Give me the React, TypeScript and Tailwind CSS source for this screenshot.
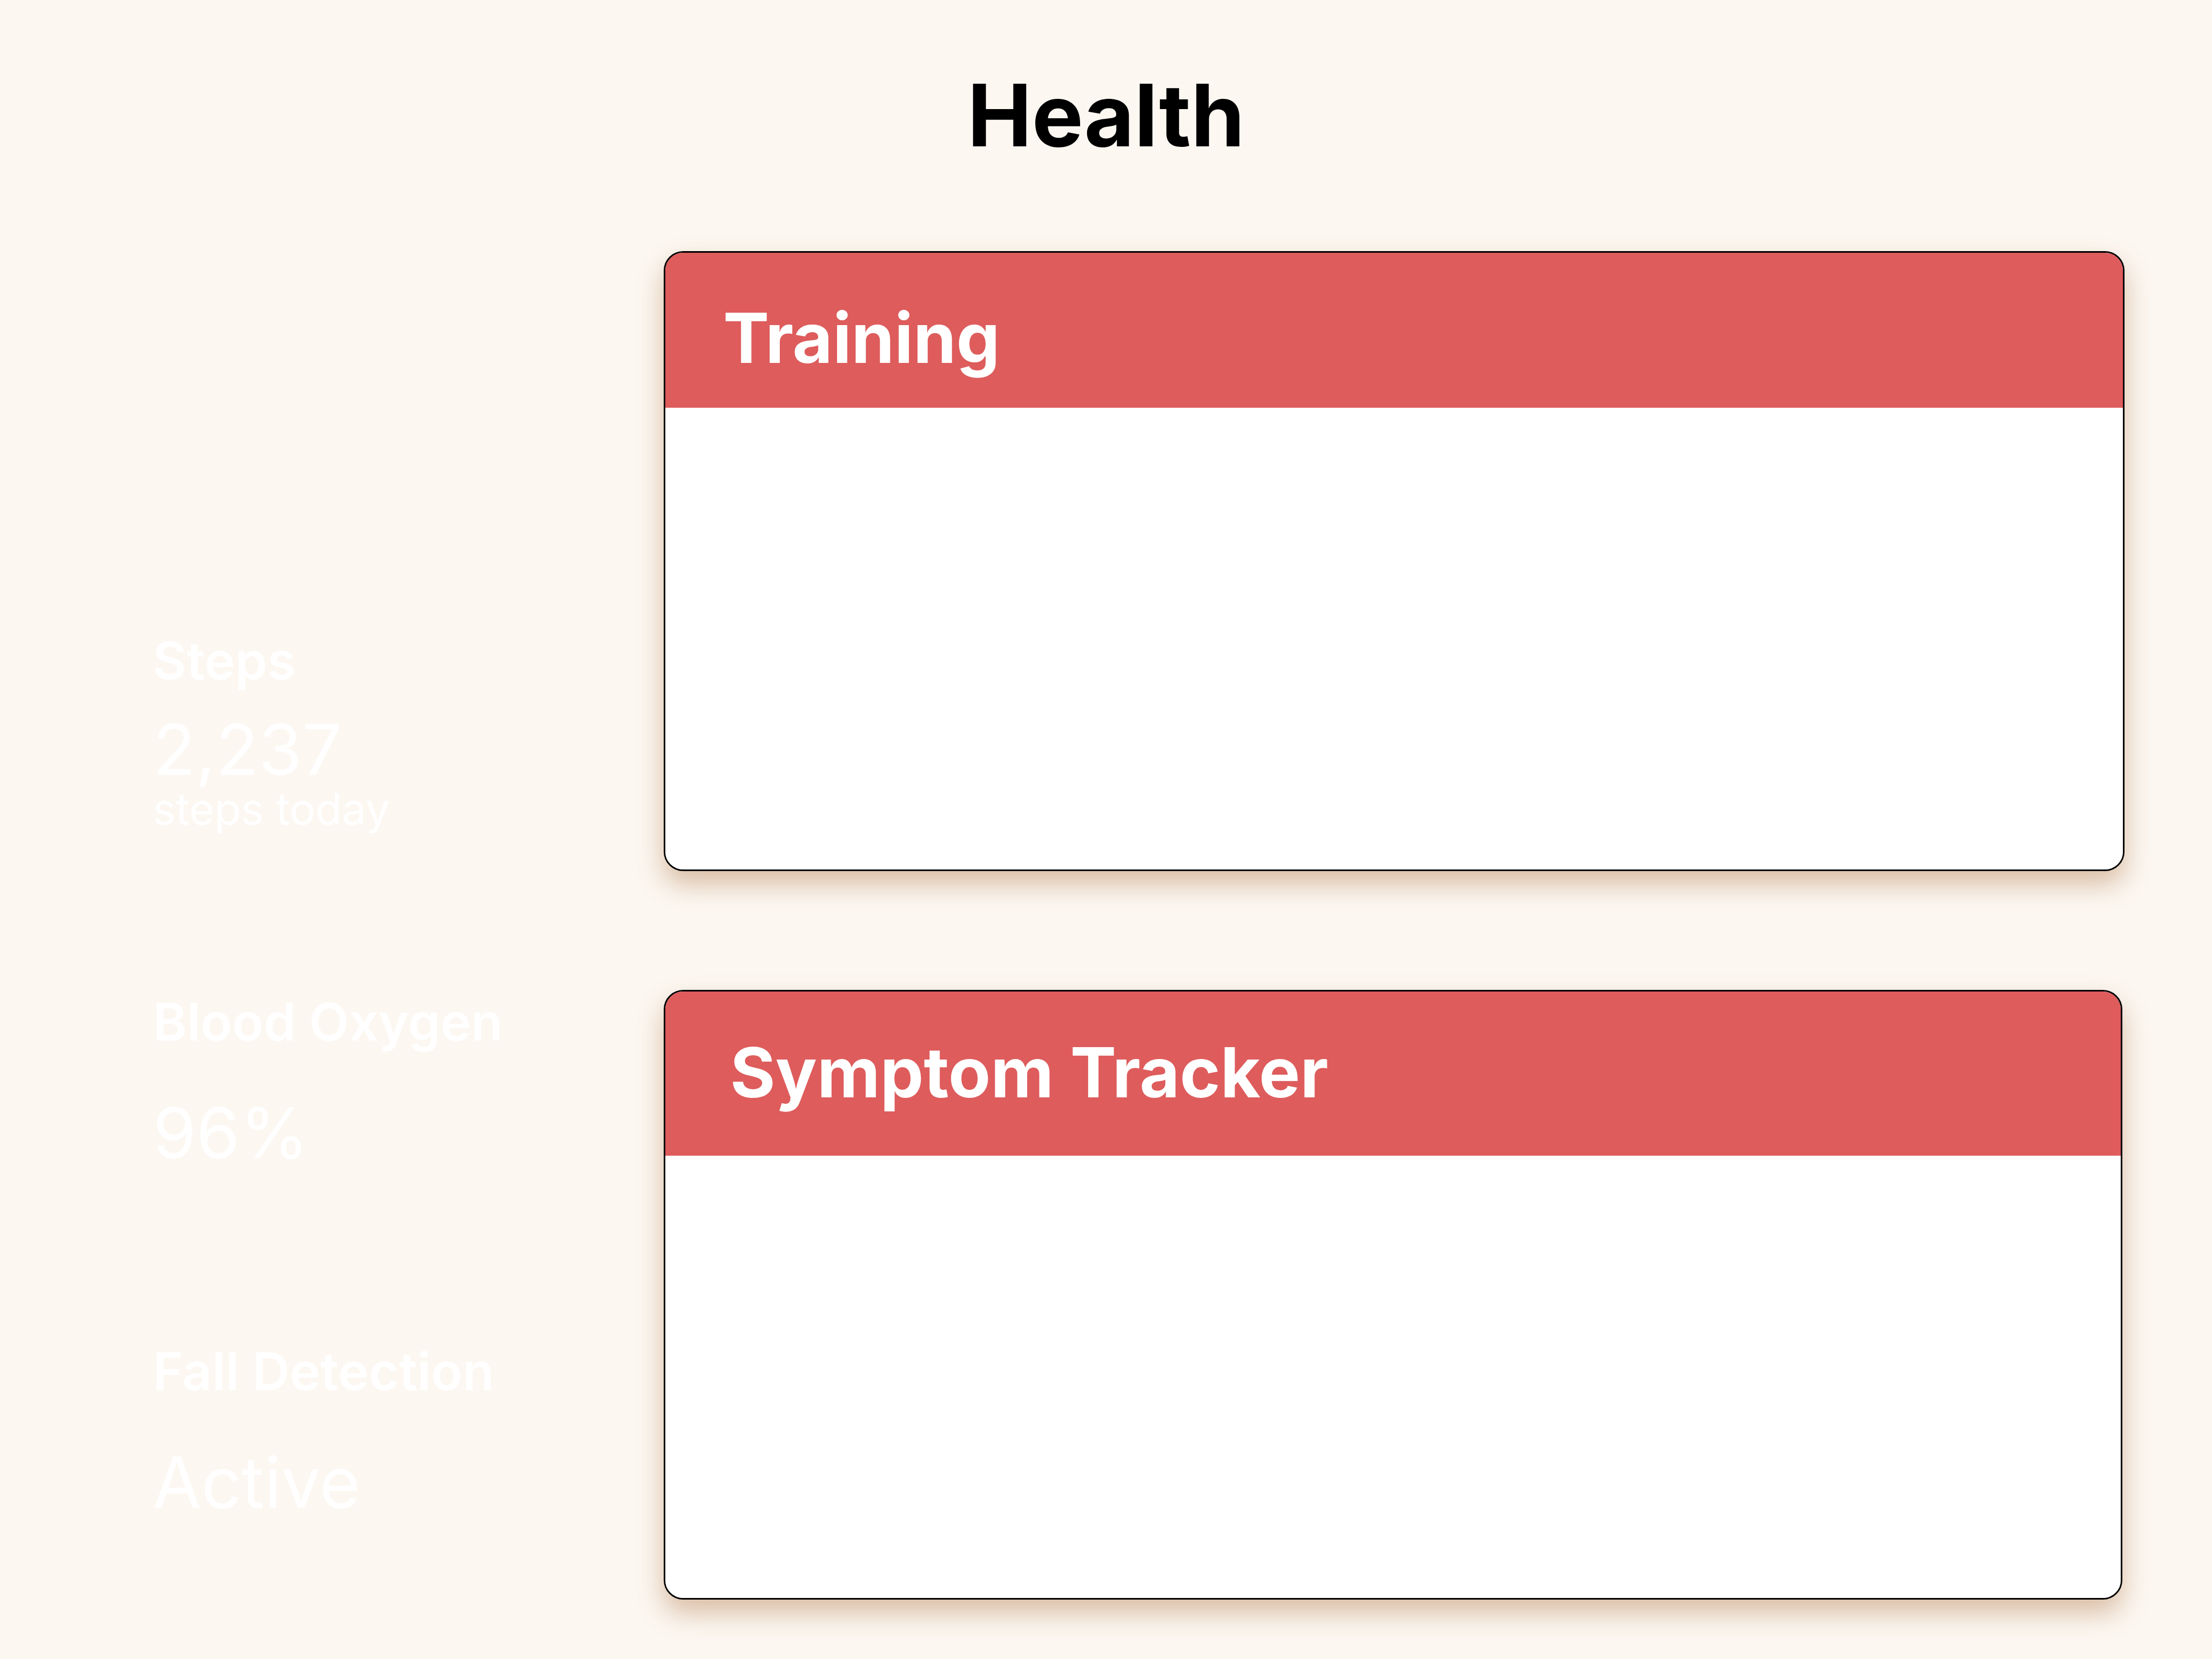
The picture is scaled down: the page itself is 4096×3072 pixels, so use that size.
import React from "react";

const font = { fontFamily: "Inter, 'Noto Sans', sans-serif" };

function Stat({
  label,
  value,
  sub,
  gap,
}: {
  label: string;
  value: string;
  sub?: string;
  gap: string;
}) {
  return (
    <div className="h-[647px] flex flex-col justify-center text-white">
      <div className="text-[96px] leading-none font-semibold">{label}</div>
      <div className={`text-[130px] leading-none font-normal ${gap}`}>{value}</div>
      {sub ? <div className="text-[80px] leading-none font-normal mt-[5px]">{sub}</div> : null}
    </div>
  );
}

function Card({
  title,
  headerClass,
  bodyClass,
  widthClass,
}: {
  title: string;
  headerClass: string;
  bodyClass: string;
  widthClass: string;
}) {
  return (
    <div
      className={`${widthClass} border-[3px] border-black rounded-[36px] overflow-hidden bg-white shadow-[0_24px_48px_rgba(170,110,60,0.42)]`}
    >
      <div className={`bg-[#de5c5c] text-white text-[128px] leading-none font-bold ${headerClass}`}>
        {title}
      </div>
      <div className={`bg-white ${bodyClass}`} />
    </div>
  );
}

export default function App() {
  return (
    <div className="w-[4096px] h-[3072px] bg-[#fcf7f1] overflow-hidden" style={font}>
      <h1 className="pt-[133px] text-center text-[160px] leading-none font-bold text-black">Health</h1>
      <div className="flex mt-[172px]">
        <div className="w-[1229px] pl-[283px] pt-[568px] flex flex-col">
          <Stat label="Steps" value="2,237" sub="steps today" gap="mt-[52px]" />
          <Stat label="Blood Oxygen" value="96%" gap="mt-[93px]" />
          <Stat label="Fall Detection" value="Active" gap="mt-[93px]" />
        </div>
        <div className="flex flex-col gap-[220px]">
          <Card
            title="Training"
            widthClass="w-[2705px]"
            headerClass="pl-[107px] pt-[94px] pb-[65px]"
            bodyClass="h-[855px]"
          />
          <Card
            title="Symptom Tracker"
            widthClass="w-[2701px]"
            headerClass="pl-[120px] pt-[86px] pb-[90px]"
            bodyClass="h-[819px]"
          />
        </div>
      </div>
    </div>
  );
}
